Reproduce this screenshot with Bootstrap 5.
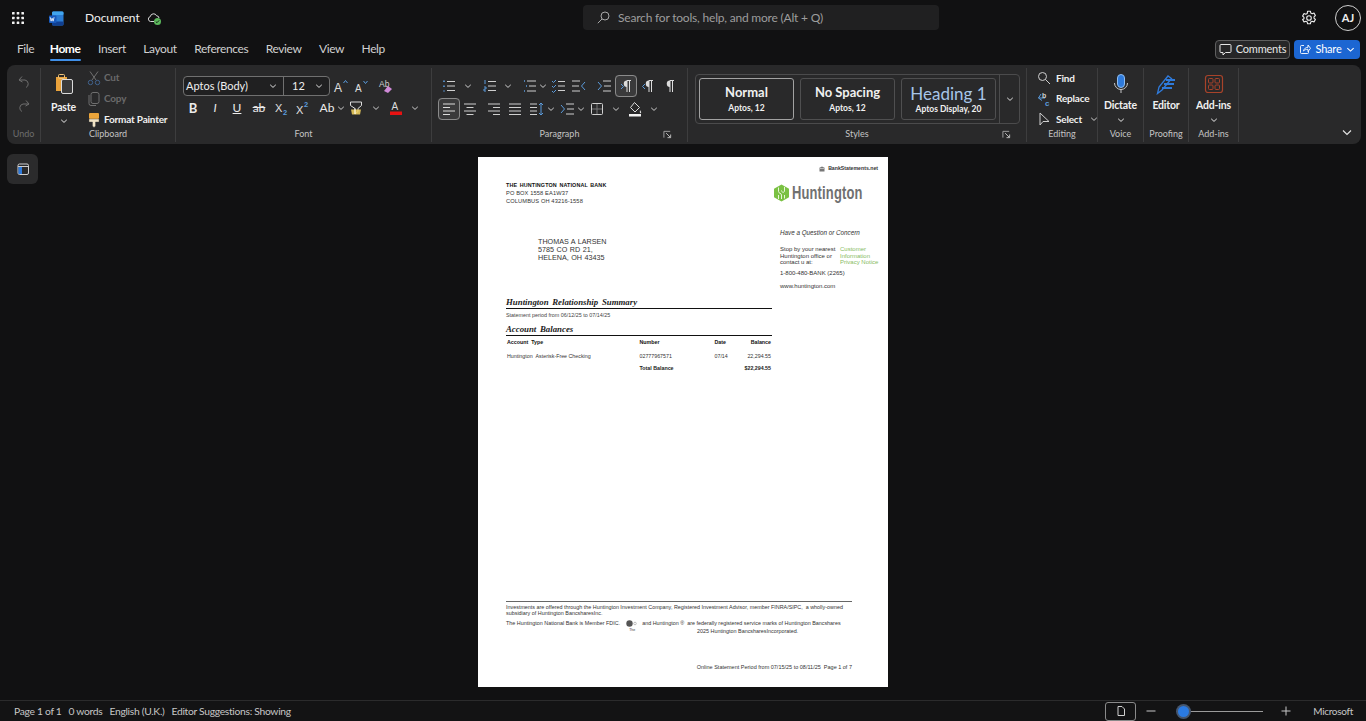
<!DOCTYPE html>
<html lang="en">
<head>
    <meta charset="UTF-8">
    <meta name="viewport" content="width=device-width, initial-scale=1.0">
    <title>Document - Word</title>
    <link href="https://cdn.jsdelivr.net/npm/bootstrap@5.3.3/dist/css/bootstrap.min.css" rel="stylesheet">
    <style>
        html, body { height: 721px; overflow: hidden; }
        body { background: #111112; color: #e6e6e6; font-family: Lato, "Liberation Sans", sans-serif; font-size: 11px; }
        svg { display: block; flex: none; }
        .shell { height: 721px; }

        /* title bar */
        .titlebar { height: 36px; }
        .waffle { margin-left: 11px; }
        .wordlogo { margin-left: 24px; }
        .docname { margin-left: 21px; font-size: 12px; letter-spacing: -.1px; color: #f0f0f0; }
        .cloud { margin-left: 7px; }
        .searchbox { position: absolute; left: 583px; top: 5px; width: 356px; height: 25px; background: #202021; border-radius: 4px; color: #9d9d9d; font-size: 12px; letter-spacing: -.2px; padding-left: 13px; gap: 7px; }
        .searchbox span { padding-top: 1px; }
        .gear { margin-left: auto; }
        .avatar { width: 26px; height: 26px; border: 1px solid #cfcfcf; border-radius: 50%; margin: 0 5px 0 18px; font-weight: 700; font-size: 11px; color: #eee; }

        /* tabs */
        .tabbar { height: 29px; padding: 0 0 3px 17px; color: #d0d0d0; }
        .tablist { gap: 17.5px; font-size: 12px; letter-spacing: -.4px; }
        .tabitem { position: relative; line-height: 24px; }
        .tabitem:first-child { margin-right: -2px; }
        .tabitem.on { color: #fff; font-weight: 700; }
        .tabitem.on::after { content: ""; position: absolute; left: 0; right: 0; bottom: 0; height: 2px; background: #3f8fe8; border-radius: 1px; }
        .cmtbtn { margin-left: auto; width: 75px; height: 19px; border: 1px solid #5f5f5f; border-radius: 4px; background: #262627; color: #e6e6e6; font-size: 11px; letter-spacing: -.2px; gap: 4px; }
        .sharebtn { margin: 0 6px 0 4px; width: 66px; height: 19px; border-radius: 4px; background: #1c66d2; color: #fff; font-size: 11px; letter-spacing: -.2px; gap: 4px; }

        /* ribbon */
        .ribbon { height: 79px; margin: 0 5px 0 7px; padding-top: 3px; background: #29292a; border-radius: 8px; }
        .rgroup { height: 74px; border-right: 1px solid #3d3d3e; position: relative; }
        .rbody { height: 59px; display: flow-root; }
        .rlabel { height: 15px; line-height: 14px; text-align: center; font-size: 9px; color: #c4c4c4; }
        .rlabel.off { color: #6e6e6e; }
        .launcher { position: absolute; right: 15px; bottom: 3px; }
        .gp-undo { width: 34px; }
        .gp-clip { width: 135px; }
        .gp-font { width: 256px; }
        .gp-para { width: 256px; }
        .gp-style { width: 339px; }
        .gp-edit { width: 71px; }
        .gp-voice { width: 46px; }
        .gp-proof { width: 45px; }
        .gp-addin { width: 50px; }
        .collapse-arrow { margin: auto 8px 6px auto; }

        .undo-stack { padding-top: 7px; gap: 10px; align-items: center; }
        .bigtool { width: 100%; padding-top: 5px; font-size: 10.5px; letter-spacing: -.2px; font-weight: 700; color: #f0f0f0; }
        .bigtool .cap { margin-top: 4px; line-height: 13px; }
        .bigtool .chev { margin-top: 4px; }
        .paste-col { width: 45px; }
        .paste-col .cap { margin-top: 6px; }
        .paste-col .chev { margin-top: 3px; }
        .cliprows { margin-top: -1px; }
        .cliprow { height: 21px; gap: 2px; font-size: 10px; letter-spacing: -.2px; color: #f0f0f0; font-weight: 700; white-space: nowrap; }
        .cliprow.off { color: #6a6a6a; }
        .cliprow svg { width: 16px; }

        .fontrows { padding: 8px 0 0 7px; }
        .combo { width: 147px; height: 20px; border: 1px solid #707070; border-radius: 4px; background: #202021; font-size: 11px; color: #eee; }
        .combo-name { width: 100px; padding: 0 6px 0 2px; border-right: 1px solid #707070; }
        .combo-size { flex: 1; padding: 0 6px 0 8px; }
        .toolrow { height: 20px; margin-top: 3px; }
        .toolrow.first { margin-top: 0; }
        .fontrows .toolrow { margin-top: 2px; }
        .fontrows .toolrow.first { margin-top: 0; }
        .ch { width: 8px; }
        .glyph { width: 16px; text-align: center; font-size: 12px; line-height: 16px; color: #ececec; }
        .glyph.fw-bold { font-size: 13px; }
        .boxed { outline: 1px solid #8b8b8b; outline-offset: 2px; border-radius: 1px; background: #3a3a3b; box-shadow: 0 0 0 3px #3a3a3b; }

        .m1 { margin-left: 1px; } .m2 { margin-left: 2px; } .m3 { margin-left: 3px; } .m4 { margin-left: 4px; }
        .m5 { margin-left: 5px; } .m6 { margin-left: 6px; } .m7 { margin-left: 7px; } .m8 { margin-left: 8px; }
        .m9 { margin-left: 9px; } .m10 { margin-left: 10px; } .m17 { margin-left: 17px; } .m20 { margin-left: 20px; } .m21 { margin-left: 21px; }

        .pararows { padding: 8px 0 0 9px; }
        .gallery { margin: 6px 0 0 7px; width: 325px; height: 50px; border: 1px solid #4b4b4c; border-radius: 4px; padding-left: 3px; gap: 6px; }
        .stylecard { width: 95px; height: 42px; flex: none; border: 1px solid #4f4f50; border-radius: 3px; text-align: center; color: #f0f0f0; font-weight: 700; }
        .stylecard.on { border-color: #a2a2a2; }
        .stylename { font-size: 13px; line-height: 16px; }
        .styleinfo { font-size: 8.5px; line-height: 11px; margin-top: 3px; }
        .stylecard .headname { font-size: 17px; line-height: 19px; color: #a7c6e8; font-weight: 400; }
        .headname + .styleinfo { margin-top: 1px; }
        .gallery-more { width: 20px; height: 48px; flex: none; margin-left: -3px; border-left: 1px solid #4b4b4c; }

        .editrows { padding-left: 9px; }
        .editrows .cliprow { gap: 4px; height: 20.5px; }

        /* document */
        .canvas { display: grid; grid-template-columns: 1fr 410px 1fr; padding-top: 13px; min-height: 0; }
        .sidebtn { margin: -3px 0 0 7px; width: 31px; height: 30px; background: #2b2b2c; border-radius: 6px; }
        .sheet { height: 530px; background: #fff; color: #222; font-family: "Liberation Sans", sans-serif; padding: 9px 6px 0 28px; line-height: 1; }
        .stamp { font-size: 5.2px; font-weight: 700; gap: 3px; height: 6px; color: #333; padding-right: 4px; }
        .top-split { gap: 8px; margin-top: 9px; }
        .leftcol { width: 266px; flex: none; }
        .rightcol { width: 102px; flex: none; }
        .sender { font-size: 5.7px; line-height: 8px; color: #333; letter-spacing: .12px; }
        .sender b { color: #111; word-spacing: 1px; font-size: 5.4px; }
        .recipient { font-size: 7.2px; line-height: 8.1px; margin: 33px 0 0 32px; color: #333; word-spacing: .5px; }
        .sumhead { font-family: "Liberation Serif", serif; font-style: italic; font-weight: 700; font-size: 8.8px; line-height: 10px; color: #222; word-spacing: 1.5px; border-bottom: 1px solid #111; padding-bottom: 1px; }
        .sumhead.one { margin-top: 35px; }
        .sumhead.two { margin-top: 6px; }
        .period { font-size: 5.4px; line-height: 6px; margin-top: 3px; color: #444; }
        .balances { width: 100%; font-size: 5.3px; color: #333; }
        .balances th { font-weight: 700; color: #111; height: 12px; }
        .balances td { padding-top: 6px; height: 12px; }
        .balances tr + tr + tr td { padding-top: 5px; height: 12px; font-weight: 700; color: #222; }
        .col-num { width: 75px; }
        .col-date { width: 30px; }
        .col-bal { width: 27px; text-align: right; padding-right: 1px; }
        .hlogo { height: 20px; margin: 2px 0 0 -7px; gap: 2px; color: #707070; font-weight: 700; font-size: 18px; }
        .hlogo span { display: inline-block; transform: scaleX(.72); transform-origin: left center; letter-spacing: .2px; }
        .help { margin-top: 26px; font-size: 6px; color: #333; }
        .help i { font-size: 6.3px; display: block; line-height: 7px; }
        .help-split { margin-top: 10px; line-height: 6.5px; white-space: nowrap; }
        .help-left { width: 60px; }
        .help-link { color: #86bb62; }
        .help-gap { margin-top: 4px; }
        .help-gap + .help-gap { margin-top: 7px; }
        .legal { margin-top: auto; margin-right: 30px; border-top: 1px solid #666; font-size: 5.4px; line-height: 6.4px; color: #333; padding-top: 2px; white-space: nowrap; }
        .fdic-line { margin-top: 3px; height: 8px; gap: 3px; align-items: center; }
        .legal-center { padding-left: 191px; }
        .pageline { margin-top: 30px; margin-bottom: 17px; text-align: right; font-size: 5.5px; line-height: 6px; }
        .fdic-mark { position: relative; width: 13px; height: 8px; margin-left: 3px; }
        .fdic-mark small { position: absolute; left: 3px; top: 8px; font-size: 3.5px; line-height: 4px; }

        /* status bar */
        .statusbar { height: 21px; border-top: 1px solid #2b2b2c; color: #c6c6c6; font-size: 10.3px; letter-spacing: -.3px; padding-left: 14px; background: #131314; }
        .statusleft { gap: 7px; padding-top: 1px; }
        .viewbtn { margin-left: auto; width: 31px; height: 19px; border: 1px solid #8a8a8a; border-radius: 3px; }
        .zoomtrack { width: 86px; height: 1px; background: #9b9b9b; position: relative; }
        .zoomknob { position: absolute; left: 1px; top: -5px; width: 11px; height: 11px; border-radius: 50%; background: #2a7ae2; box-shadow: 0 0 0 2px #45566e; }
        .msft { margin-right: 13px; padding-top: 1px; font-size: 10px; }
    </style>
</head>
<body>
    <svg width="0" height="0" class="position-absolute">
        <defs>
            <symbol id="chev" viewBox="0 0 8 8"><path d="M1.2 2.8 4 5.4l2.8-2.6" fill="none" stroke="currentColor" stroke-width="1"/></symbol>
            <symbol id="bullets" viewBox="0 0 16 16"><g stroke="#5b9bdc" stroke-width="1.6" stroke-dasharray="1.6 3.4"><path d="M3 2.5v11"/></g><path d="M6 3.5h8M6 8h8M6 12.5h8" stroke="#cfcfcf" fill="none"/></symbol>
            <symbol id="numbers" viewBox="0 0 16 16"><path d="M3 2v4M2 9h2v2H2v2h2" stroke="#5b9bdc" fill="none"/><path d="M6 3.5h8M6 8h8M6 12.5h8" stroke="#cfcfcf" fill="none"/></symbol>
            <symbol id="multi" viewBox="0 0 16 16"><path d="M2 3h1M4 8h1M2 13h1" stroke="#5b9bdc" stroke-width="1.6"/><path d="M5 3h9M7 8h7M5 13h9" stroke="#cfcfcf" fill="none"/></symbol>
            <symbol id="checklist" viewBox="0 0 16 16"><path d="m1 3 1.5 1.5L5 2M1 8l1.5 1.5L5 7M1 13l1.5 1.5L5 12" stroke="#5b9bdc" fill="none"/><path d="M7 3.5h7M7 8h7M7 12.5h7" stroke="#cfcfcf" fill="none"/></symbol>
            <symbol id="outdent" viewBox="0 0 16 16"><path d="M1 3h8M1 8h7M1 13h8" stroke="#cfcfcf" fill="none"/><path d="M14 4l-3.500 4 3.500 4" stroke="#5b9bdc" fill="none"/></symbol>
            <symbol id="indent" viewBox="0 0 16 16"><path d="M7 3h8M8 8h7M7 13h8" stroke="#cfcfcf" fill="none"/><path d="M2 4l3.500 4L2 12" stroke="#5b9bdc" fill="none"/></symbol>
            <symbol id="pilcrow" viewBox="0 0 16 16"><path d="M8 14V2.500h4M10.500 14V2.500" stroke="#dcdcdc" fill="none"/><path d="M8 2.500a3 3 0 0 0 0 6.500z" fill="#dcdcdc"/></symbol>
            <symbol id="ltr" viewBox="0 0 16 16"><path d="M9 14V2.500h4M11.500 14V2.500" stroke="#dcdcdc" fill="none"/><path d="M9 2.500a3 3 0 0 0 0 6.500z" fill="#dcdcdc"/><path d="m3 6 2.500 2.500L3 11" stroke="#5b9bdc" fill="none"/></symbol>
            <symbol id="rtl" viewBox="0 0 16 16"><path d="M9 14V2.500h4M11.500 14V2.500" stroke="#dcdcdc" fill="none"/><path d="M9 2.500a3 3 0 0 0 0 6.500z" fill="#dcdcdc"/><path d="M5 6 2.500 8.500 5 11" stroke="#5b9bdc" fill="none"/></symbol>
            <symbol id="al-left" viewBox="0 0 16 16"><path d="M2 3h12M2 6.500h7M2 10h12M2 13.500h7" stroke="#dcdcdc" fill="none"/></symbol>
            <symbol id="al-center" viewBox="0 0 16 16"><path d="M2 3h12M4.500 6.500h7M2 10h12M4.500 13.500h7" stroke="#cfcfcf" fill="none"/></symbol>
            <symbol id="al-right" viewBox="0 0 16 16"><path d="M2 3h12M7 6.500h7M2 10h12M7 13.500h7" stroke="#cfcfcf" fill="none"/></symbol>
            <symbol id="al-just" viewBox="0 0 16 16"><path d="M2 3h12M2 6.500h12M2 10h12M2 13.500h12" stroke="#cfcfcf" fill="none"/></symbol>
            <symbol id="spacing" viewBox="0 0 16 16"><path d="M1 3h7M1 6.500h7M1 10h7M1 13.500h7" stroke="#cfcfcf" fill="none"/><path d="M12 2v12M10 4l2-2 2 2M10 12l2 2 2-2" stroke="#5b9bdc" fill="none"/></symbol>
            <symbol id="borders" viewBox="0 0 16 16"><rect x="2.500" y="2.500" width="11" height="11" rx="1" fill="none" stroke="#cfcfcf"/><path d="M8 3v10M3 8h10" stroke="#777"/></symbol>
            <symbol id="shade" viewBox="0 0 16 16"><path d="m7.500 1.500 5 5-4.500 4.500-4.500-4.500z" fill="none" stroke="#dcdcdc"/><path d="M13 9c1 1.500 1.500 2 1 3-.6.600-1.600 0-1-3z" fill="#dcdcdc"/><rect x="2" y="13" width="12" height="2.500" fill="#f2f2f2"/></symbol>
            <symbol id="launch" viewBox="0 0 10 10"><path d="M1 8.500V1.500h7" fill="none" stroke="#a8a8a8"/><path d="M3.500 3.500 8 8M5 8.500h3.500V5" fill="none" stroke="#c8c8c8"/></symbol>
        </defs>
    </svg>

    <div class="shell d-flex flex-column position-relative">
        <!-- title bar -->
        <div class="titlebar d-flex align-items-center">
            <svg class="waffle" width="14" height="14" viewBox="0 0 14 14" fill="#f2f2f2">
                <rect x="1" y="1" width="2.600" height="2.600" rx=".5"/><rect x="5.700" y="1" width="2.600" height="2.600" rx=".5"/><rect x="10.400" y="1" width="2.600" height="2.600" rx=".5"/>
                <rect x="1" y="5.700" width="2.600" height="2.600" rx=".5"/><rect x="5.700" y="5.700" width="2.600" height="2.600" rx=".5"/><rect x="10.400" y="5.700" width="2.600" height="2.600" rx=".5"/>
                <rect x="1" y="10.400" width="2.600" height="2.600" rx=".5"/><rect x="5.700" y="10.400" width="2.600" height="2.600" rx=".5"/><rect x="10.400" y="10.400" width="2.600" height="2.600" rx=".5"/>
            </svg>
            <svg class="wordlogo" width="15" height="15" viewBox="0 0 15 15">
                <rect x="3" y="0.500" width="11.500" height="14" rx="1.500" fill="#2b7cd3"/>
                <rect x="3" y="0.500" width="11.500" height="3.500" rx="1.200" fill="#41a5ee"/>
                <rect x="3" y="10.500" width="11.500" height="4" rx="1.200" fill="#103f91"/>
                <rect x="0" y="4.500" width="7.500" height="7.500" rx="1" fill="#185abd"/>
                <path d="m1.200 6.200.9 4 1-3 1 3 1-4" fill="none" stroke="#fff" stroke-width=".8"/>
            </svg>
            <span class="docname">Document</span>
            <svg class="cloud" width="15" height="15" viewBox="0 0 15 15">
                <path d="M3.500 10.500A2.500 2.500 0 0 1 3.300 5.600 3.300 3.300 0 0 1 9.600 4.800 2.400 2.400 0 0 1 12 7" fill="none" stroke="#d8d8d8"/>
                <path d="M3.500 10.500H7" fill="none" stroke="#d8d8d8"/>
                <circle cx="10.500" cy="10.500" r="3.500" fill="#5cb85c"/>
                <path d="m8.800 10.600 1.200 1.100 2.100-2.300" fill="none" stroke="#111" stroke-width=".9"/>
            </svg>

            <div class="searchbox d-flex align-items-center">
                <svg width="15" height="15" viewBox="0 0 15 15"><circle cx="9" cy="6" r="4" fill="none" stroke="#a8a8a8"/><path d="M6 9 1.800 13.200" stroke="#a8a8a8"/></svg>
                <span>Search for tools, help, and more (Alt + Q)</span>
            </div>

            <svg class="gear" width="16" height="16" viewBox="0 0 16 16">
                <circle cx="8" cy="8" r="2.300" fill="none" stroke="#ededed" stroke-width="1.100"/>
                <path d="M6.600 1.200h2.800l.4 1.900 1.400.7 1.800-.7 1.400 2.400-1.400 1.300v1.400l1.400 1.300-1.400 2.400-1.800-.7-1.400.7-.4 1.900H6.600l-.4-1.900-1.400-.7-1.800.7-1.400-2.400L3 8.700V7.300L1.600 6l1.400-2.400 1.800.7 1.400-.7z" fill="none" stroke="#ededed" stroke-width="1.100" stroke-linejoin="round"/>
            </svg>
            <div class="avatar d-flex align-items-center justify-content-center">AJ</div>
        </div>

        <!-- tabs -->
        <div class="tabbar d-flex align-items-center">
            <div class="tablist d-flex">
                <span class="tabitem">File</span>
                <span class="tabitem on">Home</span>
                <span class="tabitem">Insert</span>
                <span class="tabitem">Layout</span>
                <span class="tabitem">References</span>
                <span class="tabitem">Review</span>
                <span class="tabitem">View</span>
                <span class="tabitem">Help</span>
            </div>
            <div class="cmtbtn d-flex align-items-center justify-content-center">
                <svg width="13" height="13" viewBox="0 0 13 13"><path d="M2 1.500h9a1 1 0 0 1 1 1v6a1 1 0 0 1-1 1H6.500L4 12V9.500H2a1 1 0 0 1-1-1v-6a1 1 0 0 1 1-1z" fill="none" stroke="#e6e6e6"/></svg>
                <span>Comments</span>
            </div>
            <div class="sharebtn d-flex align-items-center justify-content-center">
                <svg width="12" height="12" viewBox="0 0 12 12"><path d="M5 2.500H2.500a1 1 0 0 0-1 1v6a1 1 0 0 0 1 1h6a1 1 0 0 0 1-1V8M4.500 8C5 5.500 7 4.300 9 4.300V2l2.500 3.300L9 8.500V6.300C7 6.300 5.500 6.800 4.500 8z" fill="none" stroke="#fff" stroke-width=".9"/></svg>
                <span>Share</span>
                <svg width="9" height="9" viewBox="0 0 8 8" color="#fff"><use href="#chev"/></svg>
            </div>
        </div>

        <!-- ribbon -->
        <div class="ribbon d-flex">
            <section class="rgroup gp-undo">
                <div class="rbody d-flex flex-column undo-stack">
                    <svg width="14" height="14" viewBox="0 0 14 14"><path d="M5 1.500 2 5l3.500 2M2.500 5H8a4 4 0 0 1 1 7.500" fill="none" stroke="#6f6f6f"/></svg>
                    <svg width="14" height="14" viewBox="0 0 14 14"><path d="M9 1.500 12 5 8.500 7M11.500 5H6a4 4 0 0 0-1 7.500" fill="none" stroke="#6f6f6f"/></svg>
                </div>
                <div class="rlabel off">Undo</div>
            </section>

            <section class="rgroup gp-clip">
                <div class="rbody d-flex">
                    <div class="paste-col">
                        <div class="bigtool d-flex flex-column align-items-center">
                            <svg width="20" height="22" viewBox="0 0 20 22">
                                <path d="M2 4h11v14H2z" fill="#e9a23b"/>
                                <rect x="4.500" y="1.500" width="6" height="4" rx="1" fill="none" stroke="#f0c47a"/>
                                <rect x="7.500" y="6.500" width="11" height="14" rx="1.500" fill="#3a3a3b" stroke="#dcdcdc"/>
                            </svg>
                            <span class="cap">Paste</span>
                            <svg class="chev" width="8" height="8" color="#e6e6e6"><use href="#chev"/></svg>
                        </div>
                    </div>
                    <div class="cliprows">
                        <div class="cliprow off d-flex align-items-center">
                            <svg height="16" viewBox="0 0 16 16"><path d="M4 1.500 10 10M12 1.500 6 10" stroke="#6f6f6f" fill="none"/><circle cx="4.500" cy="12.500" r="2.200" fill="none" stroke="#41638f"/><circle cx="11.500" cy="12.500" r="2.200" fill="none" stroke="#41638f"/></svg>
                            <span>Cut</span>
                        </div>
                        <div class="cliprow off d-flex align-items-center">
                            <svg height="16" viewBox="0 0 16 16"><rect x="5" y="1.500" width="8" height="11" rx="2" fill="none" stroke="#6f6f6f"/><path d="M3 4v8.500a2 2 0 0 0 2 2h5" fill="none" stroke="#6f6f6f"/></svg>
                            <span>Copy</span>
                        </div>
                        <div class="cliprow d-flex align-items-center">
                            <svg height="16" viewBox="0 0 16 16"><rect x="3" y="1" width="10" height="6" rx="1" fill="#eaa43a"/><path d="M3 7h10v3H9.500v4L8 15.500 6.500 14v-4H3z" fill="#f0e2c4" stroke="#444" stroke-width=".4"/></svg>
                            <span>Format Painter</span>
                        </div>
                    </div>
                </div>
                <div class="rlabel">Clipboard</div>
            </section>

            <section class="rgroup gp-font">
                <div class="rbody fontrows">
                    <div class="toolrow first d-flex align-items-center">
                        <div class="combo d-flex align-items-stretch">
                            <div class="combo-name d-flex align-items-center justify-content-between"><span>Aptos (Body)</span><svg width="8" height="8" color="#ddd"><use href="#chev"/></svg></div>
                            <div class="combo-size d-flex align-items-center justify-content-between"><span>12</span><svg width="8" height="8" color="#ddd"><use href="#chev"/></svg></div>
                        </div>
                        <svg class="m3" width="16" height="16" viewBox="0 0 16 16"><text x="1" y="14" font-family="Liberation Sans" font-size="12" fill="#e0e0e0">A</text><path d="m10.500 5 2-2.500 2 2.500" fill="none" stroke="#5b9bdc"/></svg>
                        <svg class="m4" width="16" height="16" viewBox="0 0 16 16"><text x="2" y="14" font-family="Liberation Sans" font-size="10" fill="#e0e0e0">A</text><path d="m10.500 3 2 2.500 2-2.500" fill="none" stroke="#5b9bdc"/></svg>
                        <svg class="m9" width="16" height="16" viewBox="0 0 16 16"><text x="1" y="9" font-family="Liberation Sans" font-size="8.500" fill="#d0d0d0">Ab</text><path d="m6 13 4-5 4 3-4 4z" fill="#d08ad8"/></svg>
                    </div>
                    <div class="toolrow d-flex align-items-center">
                        <span class="glyph m2 fw-bold">B</span>
                        <span class="glyph m6 fst-italic">I</span>
                        <span class="glyph m6 text-decoration-underline">U</span>
                        <span class="glyph m6 text-decoration-line-through">ab</span>
                        <svg class="m8" width="16" height="16" viewBox="0 0 16 16"><text x="0" y="12" font-family="Liberation Sans" font-size="11" fill="#e0e0e0">X</text><text x="8" y="15" font-family="Liberation Sans" font-weight="700" font-size="7.500" fill="#5b9bdc">2</text></svg>
                        <svg class="m5" width="16" height="16" viewBox="0 0 16 16"><text x="0" y="14" font-family="Liberation Sans" font-size="11" fill="#e0e0e0">X</text><text x="8" y="7" font-family="Liberation Sans" font-weight="700" font-size="7.500" fill="#5b9bdc">2</text></svg>
                        <span class="glyph m7">Ab</span>
                        <svg class="ch m2" width="8" height="8" color="#ccc"><use href="#chev"/></svg>
                        <svg class="m3" width="16" height="16" viewBox="0 0 16 16"><path d="M2.500 2h11v3.500L10 8.500v3L7 14v-5.500L2.500 5.500z" fill="none" stroke="#dcdcdc"/><path d="M3 9.500h10l-1 5H4z" fill="#f4d35e" opacity=".85"/><path d="M7 14V8.500" stroke="#fff"/></svg>
                        <svg class="ch m8" width="8" height="8" color="#ccc"><use href="#chev"/></svg>
                        <svg class="m8" width="16" height="16" viewBox="0 0 16 16"><text x="3.500" y="10" font-family="Liberation Sans" font-size="10" fill="#dcdcdc">A</text><rect x="2" y="11.500" width="12" height="3.500" fill="#e81212"/></svg>
                        <svg class="ch m7" width="8" height="8" color="#ccc"><use href="#chev"/></svg>
                    </div>
                </div>
                <div class="rlabel">Font</div>
            </section>

            <section class="rgroup gp-para">
                <svg class="launcher" width="9" height="9" viewBox="0 0 10 10"><use href="#launch"/></svg>
                <div class="rbody pararows">
                    <div class="toolrow first d-flex align-items-center">
                        <svg width="16" height="16"><use href="#bullets"/></svg>
                        <svg class="ch m7" width="8" height="8" color="#ccc"><use href="#chev"/></svg>
                        <svg class="m10" width="16" height="16"><use href="#numbers"/></svg>
                        <svg class="ch m6" width="8" height="8" color="#ccc"><use href="#chev"/></svg>
                        <svg class="m10" width="16" height="16"><use href="#multi"/></svg>
                        <svg class="ch m1" width="8" height="8" color="#ccc"><use href="#chev"/></svg>
                        <svg class="m4" width="16" height="16"><use href="#checklist"/></svg>
                        <svg class="m4" width="16" height="16"><use href="#outdent"/></svg>
                        <svg class="m9" width="16" height="16"><use href="#indent"/></svg>
                        <svg class="m6 boxed" width="16" height="16"><use href="#ltr"/></svg>
                        <svg class="m6" width="16" height="16"><use href="#rtl"/></svg>
                        <svg class="m6" width="16" height="16"><use href="#pilcrow"/></svg>
                    </div>
                    <div class="toolrow d-flex align-items-center">
                        <svg class="boxed" width="16" height="16"><use href="#al-left"/></svg>
                        <svg class="m5" width="16" height="16"><use href="#al-center"/></svg>
                        <svg class="m8" width="16" height="16"><use href="#al-right"/></svg>
                        <svg class="m5" width="16" height="16"><use href="#al-just"/></svg>
                        <svg class="m6" width="16" height="16"><use href="#spacing"/></svg>
                        <svg class="ch m2" width="8" height="8" color="#ccc"><use href="#chev"/></svg>
                        <svg class="m4" width="16" height="16"><use href="#indent"/></svg>
                        <svg class="ch m2" width="8" height="8" color="#ccc"><use href="#chev"/></svg>
                        <svg class="m4" width="16" height="16"><use href="#borders"/></svg>
                        <svg class="ch m7" width="8" height="8" color="#ccc"><use href="#chev"/></svg>
                        <svg class="m7" width="16" height="16"><use href="#shade"/></svg>
                        <svg class="ch m7" width="8" height="8" color="#ccc"><use href="#chev"/></svg>
                    </div>
                </div>
                <div class="rlabel">Paragraph</div>
            </section>

            <section class="rgroup gp-style">
                <svg class="launcher" width="9" height="9" viewBox="0 0 10 10"><use href="#launch"/></svg>
                <div class="rbody">
                    <div class="gallery d-flex align-items-center">
                        <div class="stylecard on d-flex flex-column justify-content-center"><div class="stylename">Normal</div><div class="styleinfo">Aptos, 12</div></div>
                        <div class="stylecard d-flex flex-column justify-content-center"><div class="stylename">No Spacing</div><div class="styleinfo">Aptos, 12</div></div>
                        <div class="stylecard d-flex flex-column justify-content-center"><div class="stylename headname">Heading 1</div><div class="styleinfo">Aptos Display, 20</div></div>
                        <div class="gallery-more d-flex align-items-center justify-content-center"><svg width="8" height="8" color="#ddd"><use href="#chev"/></svg></div>
                    </div>
                </div>
                <div class="rlabel">Styles</div>
            </section>

            <section class="rgroup gp-edit">
                <div class="rbody editrows">
                    <div class="cliprow d-flex align-items-center">
                        <svg height="16" viewBox="0 0 16 16"><circle cx="6.500" cy="6.500" r="4" fill="none" stroke="#cfcfcf"/><path d="m9.500 9.500 4.500 4.500" stroke="#cfcfcf"/></svg>
                        <span>Find</span>
                    </div>
                    <div class="cliprow d-flex align-items-center">
                        <svg height="16" viewBox="0 0 16 16"><path d="M5 3 2.500 7 6 9.500M2.500 7H9" fill="none" stroke="#5b9bdc"/><text x="6" y="7" font-family="Liberation Sans" font-size="7" fill="#cfcfcf">b</text><text x="9" y="14.500" font-family="Liberation Sans" font-size="8" fill="#5b9bdc">c</text></svg>
                        <span>Replace</span>
                    </div>
                    <div class="cliprow d-flex align-items-center">
                        <svg height="16" viewBox="0 0 16 16"><path d="M4 2v12l3-3.500h6z" fill="none" stroke="#cfcfcf"/></svg>
                        <span>Select</span>
                        <svg width="8" height="8" color="#ccc"><use href="#chev"/></svg>
                    </div>
                </div>
                <div class="rlabel">Editing</div>
            </section>

            <section class="rgroup gp-voice">
                <div class="rbody bigtool d-flex flex-column align-items-center">
                    <svg width="20" height="22" viewBox="0 0 20 22"><rect x="6.500" y="1.500" width="7" height="13" rx="3.500" fill="#2f7bdc" stroke="#8fbdf0"/><path d="M3.500 10a6.500 6.500 0 0 0 13 0M10 16.500V20" fill="none" stroke="#c8c8c8"/></svg>
                    <span class="cap">Dictate</span>
                    <svg class="chev" width="8" height="8" color="#e6e6e6"><use href="#chev"/></svg>
                </div>
                <div class="rlabel">Voice</div>
            </section>

            <section class="rgroup gp-proof">
                <div class="rbody bigtool d-flex flex-column align-items-center">
                    <svg width="20" height="22" viewBox="0 0 20 22"><path d="M1.500 20.500 3 14 12 3l3.500 2.500L6 17z" fill="none" stroke="#2f7bdc" stroke-width="1.300"/><path d="M10 7h9M8 11h10M6 15h10" stroke="#2f7bdc" stroke-width="2"/></svg>
                    <span class="cap">Editor</span>
                </div>
                <div class="rlabel">Proofing</div>
            </section>

            <section class="rgroup gp-addin">
                <div class="rbody bigtool d-flex flex-column align-items-center">
                    <svg width="20" height="22" viewBox="0 0 20 22" fill="none" stroke="#a8432a"><rect x="1.500" y="2.500" width="17" height="17" rx="2.500" stroke-width="1.200"/><rect x="4.500" y="5.500" width="4.500" height="4.500" rx="1"/><rect x="11" y="5.500" width="4.500" height="4.500" rx="1"/><rect x="4.500" y="12" width="4.500" height="4.500" rx="1"/><rect x="11" y="12" width="4.500" height="4.500" rx="1"/></svg>
                    <span class="cap">Add-ins</span>
                    <svg class="chev" width="8" height="8" color="#e6e6e6"><use href="#chev"/></svg>
                </div>
                <div class="rlabel">Add-ins</div>
            </section>

            <svg class="collapse-arrow" width="12" height="12" viewBox="0 0 12 12"><path d="m2 4.500 4 4 4-4" fill="none" stroke="#e6e6e6" stroke-width="1.100"/></svg>
        </div>

        <!-- canvas with the document page -->
        <main class="canvas flex-grow-1">
            <div>
                <div class="sidebtn d-flex align-items-center justify-content-center">
                    <svg width="14" height="14" viewBox="0 0 14 14"><rect x="2" y="2" width="10.500" height="10.500" rx="1.500" fill="none" stroke="#cfcfcf"/><rect x="2.500" y="4.500" width="3.500" height="7.500" fill="#2f7bdc"/><path d="M2 4.500h10" stroke="#cfcfcf"/></svg>
                </div>
            </div>
            <article class="sheet d-flex flex-column">
                <div class="stamp d-flex justify-content-end align-items-center">
                    <svg width="6" height="6" viewBox="0 0 6 6"><path d="M0 2 3 .5 6 2v.5H0zM.5 3h5v2.500h-5z" fill="#777"/></svg>
                    <span>BankStatements.net</span>
                </div>
                <div class="top-split d-flex">
                    <div class="leftcol">
                        <div class="sender"><b>THE HUNTINGTON NATIONAL BANK</b><br>PO BOX 1558 EA1W37<br>COLUMBUS OH 43216-1558</div>
                        <div class="recipient">THOMAS A LARSEN<br>5785 CO RD 21,<br>HELENA, OH 43435</div>
                        <div class="sumhead one">Huntington Relationship Summary</div>
                        <div class="period">Statement period from 06/12/25 to 07/14/25</div>
                        <div class="sumhead two">Account Balances</div>
                        <table class="balances">
                            <tr><th>Account &nbsp;Type</th><th class="col-num">Number</th><th class="col-date">Date</th><th class="col-bal">Balance</th></tr>
                            <tr><td>Huntington &nbsp;Asterisk-Free Checking</td><td>02777967571</td><td>07/14</td><td class="col-bal">22,294.55</td></tr>
                            <tr><td></td><td>Total Balance</td><td></td><td class="col-bal">$22,294.55</td></tr>
                        </table>
                    </div>
                    <div class="rightcol">
                        <div class="hlogo d-flex align-items-center">
                            <svg width="17" height="18" viewBox="0 0 17 18"><path d="M8.500 .5 16 4.800v8.400l-7.500 4.300L1 13.200V4.800z" fill="#7ac143"/><path d="M5.500 3.500v4c0 2 3 1.500 3 3.500v4M11.500 3v4c0 2-3 1.500-3-.5M5.500 15v-4M11.500 11v3.500" fill="none" stroke="#e9f5dc" stroke-width="1"/></svg>
                            <span>Huntington</span>
                        </div>
                        <div class="help">
                            <i>Have a Question or Concern</i>
                            <div class="help-split d-flex">
                                <div class="help-left">Stop by your nearest<br>Huntington office or<br>contact u at:</div>
                                <div class="help-link">Customer<br>Information<br>Privacy Notice</div>
                            </div>
                            <div class="help-gap">1-800-480-BANK (2265)</div>
                            <div class="help-gap">www.huntington.com</div>
                        </div>
                    </div>
                </div>
                <div class="legal">
                    <div>Investments are offered through the Huntington Investment Company, Registered Investment Advisor, member FINRA/SIPC, &nbsp;a wholly-owned<br>subsidiary of Huntington BancsharesInc.</div>
                    <div class="fdic-line d-flex">
                        <span>The Huntington National Bank is Member FDIC.</span>
                        <div class="fdic-mark">
                            <svg width="13" height="8" viewBox="0 0 13 8"><circle cx="3.500" cy="3.500" r="3.200" fill="#555"/><circle cx="9" cy="3.500" r="1.300" fill="none" stroke="#888" stroke-width=".5"/></svg>
                            <small>The</small>
                        </div>
                        <span>and Huntington ® &nbsp;are federally registered service marks of Huntington Bancshares</span>
                    </div>
                    <div class="legal-center">2025 Huntington BancsharesIncorporated.</div>
                    <div class="pageline">Online Statement Period from 07/15/25 to 08/11/25 &nbsp;Page 1 of 7</div>
                </div>
            </article>
            <div></div>
        </main>

        <!-- status bar -->
        <footer class="statusbar d-flex align-items-center">
            <div class="statusleft d-flex">
                <span>Page 1 of 1</span>
                <span>0 words</span>
                <span>English (U.K.)</span>
                <span>Editor Suggestions: Showing</span>
            </div>
            <div class="viewbtn d-flex align-items-center justify-content-center">
                <svg width="12" height="12" viewBox="0 0 12 12"><path d="M3 1.500h4l2.500 2.500v6.500H3z" fill="none" stroke="#d0d0d0"/></svg>
            </div>
            <svg class="m9" width="12" height="12" viewBox="0 0 12 12"><path d="M1.500 6h9" stroke="#c8c8c8"/></svg>
            <div class="zoomtrack m20"><div class="zoomknob"></div></div>
            <svg class="m17" width="12" height="12" viewBox="0 0 12 12"><path d="M1.500 6h9M6 1.500v9" stroke="#c8c8c8"/></svg>
            <span class="msft m21">Microsoft</span>
        </footer>
    </div>
    <script src="https://cdn.jsdelivr.net/npm/bootstrap@5.3.3/dist/js/bootstrap.bundle.min.js"></script>
</body>
</html>
